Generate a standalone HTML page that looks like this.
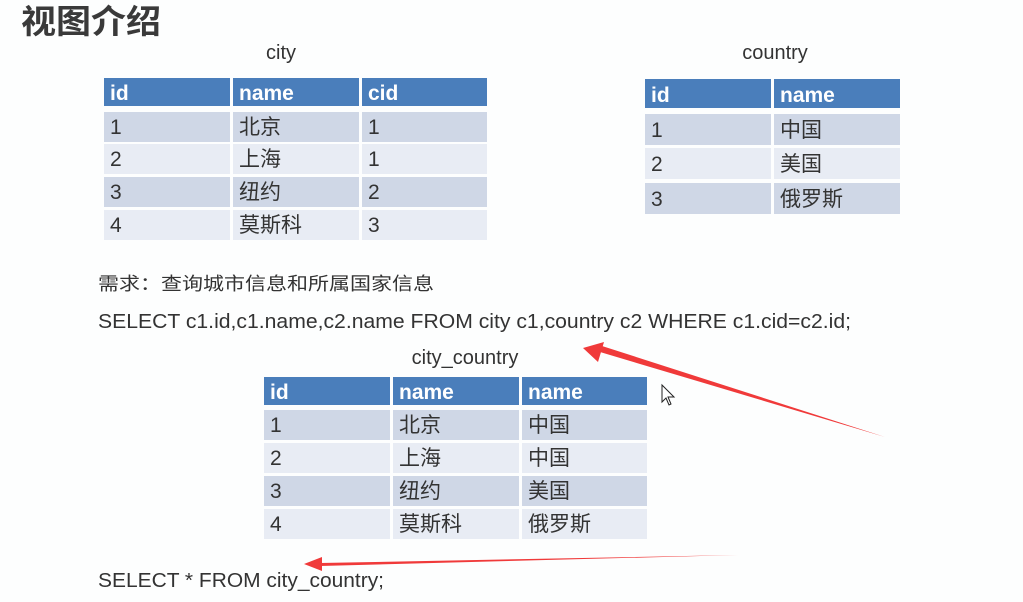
<!DOCTYPE html>
<html><head><meta charset="utf-8"><style>
html,body{margin:0;padding:0;background:#fff;}
svg{display:block;}
text{font-family:"Liberation Sans","Noto Sans CJK SC",sans-serif;fill:#333;}
.h{fill:#fff;font-weight:bold;font-size:21px;}
.c{font-size:21px;fill:#333;}
</style></head><body>
<svg width="1023" height="602" viewBox="0 0 1023 602" xmlns="http://www.w3.org/2000/svg">
<rect width="1023" height="602" fill="#fdfefe"/>
<text x="21" y="33" textLength="140" lengthAdjust="spacingAndGlyphs" style="font-size:33px;font-weight:bold;fill:#3a3a3a;font-family:'Noto Sans CJK SC',sans-serif">视图介绍</text>
<text x="281" y="59" text-anchor="middle" style="font-size:20px">city</text>
<text x="775" y="59" text-anchor="middle" style="font-size:20px">country</text>

<g>
<rect x="104" y="78" width="126" height="28" fill="#4a7ebb"/><rect x="233" y="78" width="126" height="28" fill="#4a7ebb"/><rect x="362" y="78" width="125" height="28" fill="#4a7ebb"/>
<text class="h" x="110" y="100">id</text><text class="h" x="239" y="100">name</text><text class="h" x="368" y="100">cid</text>
<rect x="104" y="112" width="126" height="30" fill="#cfd7e6"/><rect x="233" y="112" width="126" height="30" fill="#cfd7e6"/><rect x="362" y="112" width="125" height="30" fill="#cfd7e6"/>
<rect x="104" y="144" width="126" height="30" fill="#e8ecf4"/><rect x="233" y="144" width="126" height="30" fill="#e8ecf4"/><rect x="362" y="144" width="125" height="30" fill="#e8ecf4"/>
<rect x="104" y="177" width="126" height="30" fill="#cfd7e6"/><rect x="233" y="177" width="126" height="30" fill="#cfd7e6"/><rect x="362" y="177" width="125" height="30" fill="#cfd7e6"/>
<rect x="104" y="210" width="126" height="30" fill="#e8ecf4"/><rect x="233" y="210" width="126" height="30" fill="#e8ecf4"/><rect x="362" y="210" width="125" height="30" fill="#e8ecf4"/>
<text class="c" x="110" y="134">1</text><text class="c" x="239" y="134">北京</text><text class="c" x="368" y="134">1</text>
<text class="c" x="110" y="166">2</text><text class="c" x="239" y="166">上海</text><text class="c" x="368" y="166">1</text>
<text class="c" x="110" y="199">3</text><text class="c" x="239" y="199">纽约</text><text class="c" x="368" y="199">2</text>
<text class="c" x="110" y="232">4</text><text class="c" x="239" y="232">莫斯科</text><text class="c" x="368" y="232">3</text>
</g>

<g>
<rect x="645" y="79" width="126" height="29" fill="#4a7ebb"/><rect x="774" y="79" width="126" height="29" fill="#4a7ebb"/>
<text class="h" x="651" y="102">id</text><text class="h" x="780" y="102">name</text>
<rect x="645" y="114" width="126" height="31" fill="#cfd7e6"/><rect x="774" y="114" width="126" height="31" fill="#cfd7e6"/>
<rect x="645" y="148" width="126" height="31" fill="#e8ecf4"/><rect x="774" y="148" width="126" height="31" fill="#e8ecf4"/>
<rect x="645" y="183" width="126" height="31" fill="#cfd7e6"/><rect x="774" y="183" width="126" height="31" fill="#cfd7e6"/>
<text class="c" x="651" y="137">1</text><text class="c" x="780" y="137">中国</text>
<text class="c" x="651" y="171">2</text><text class="c" x="780" y="171">美国</text>
<text class="c" x="651" y="206">3</text><text class="c" x="780" y="206">俄罗斯</text>
</g>

<text x="98" y="290" style="font-size:18px;font-family:'Noto Sans CJK SC',sans-serif" textLength="336" lengthAdjust="spacingAndGlyphs">需求：查询城市信息和所属国家信息</text>
<text x="98" y="328" style="font-size:20px" textLength="753" lengthAdjust="spacingAndGlyphs">SELECT c1.id,c1.name,c2.name FROM city c1,country c2 WHERE c1.cid=c2.id;</text>
<text x="465" y="364" text-anchor="middle" style="font-size:20px">city_country</text>

<g>
<rect x="264" y="377" width="126" height="28" fill="#4a7ebb"/><rect x="393" y="377" width="126" height="28" fill="#4a7ebb"/><rect x="522" y="377" width="125" height="28" fill="#4a7ebb"/>
<text class="h" x="270" y="399">id</text><text class="h" x="399" y="399">name</text><text class="h" x="528" y="399">name</text>
<rect x="264" y="410" width="126" height="30" fill="#cfd7e6"/><rect x="393" y="410" width="126" height="30" fill="#cfd7e6"/><rect x="522" y="410" width="125" height="30" fill="#cfd7e6"/>
<rect x="264" y="443" width="126" height="30" fill="#e8ecf4"/><rect x="393" y="443" width="126" height="30" fill="#e8ecf4"/><rect x="522" y="443" width="125" height="30" fill="#e8ecf4"/>
<rect x="264" y="476" width="126" height="30" fill="#cfd7e6"/><rect x="393" y="476" width="126" height="30" fill="#cfd7e6"/><rect x="522" y="476" width="125" height="30" fill="#cfd7e6"/>
<rect x="264" y="509" width="126" height="30" fill="#e8ecf4"/><rect x="393" y="509" width="126" height="30" fill="#e8ecf4"/><rect x="522" y="509" width="125" height="30" fill="#e8ecf4"/>
<text class="c" x="270" y="432">1</text><text class="c" x="399" y="432">北京</text><text class="c" x="528" y="432">中国</text>
<text class="c" x="270" y="465">2</text><text class="c" x="399" y="465">上海</text><text class="c" x="528" y="465">中国</text>
<text class="c" x="270" y="498">3</text><text class="c" x="399" y="498">纽约</text><text class="c" x="528" y="498">美国</text>
<text class="c" x="270" y="531">4</text><text class="c" x="399" y="531">莫斯科</text><text class="c" x="528" y="531">俄罗斯</text>
</g>

<text x="98" y="587" style="font-size:20px" textLength="286" lengthAdjust="spacingAndGlyphs">SELECT * FROM city_country;</text>

<polygon points="885,437 600,352 602,346" fill="#f03a3a"/>
<polygon points="583,348 604,342 598,362" fill="#f03a3a"/>
<polygon points="738,555 320,563 320,566" fill="#f03a3a"/>
<polygon points="304,564 322,557 322,571" fill="#f03a3a"/>

<path d="M662,385 L662,402 L666,398 L669,405 L671,404 L668,397 L674,397 Z" fill="#fff" stroke="#222" stroke-width="1"/>
</svg>
</body></html>
